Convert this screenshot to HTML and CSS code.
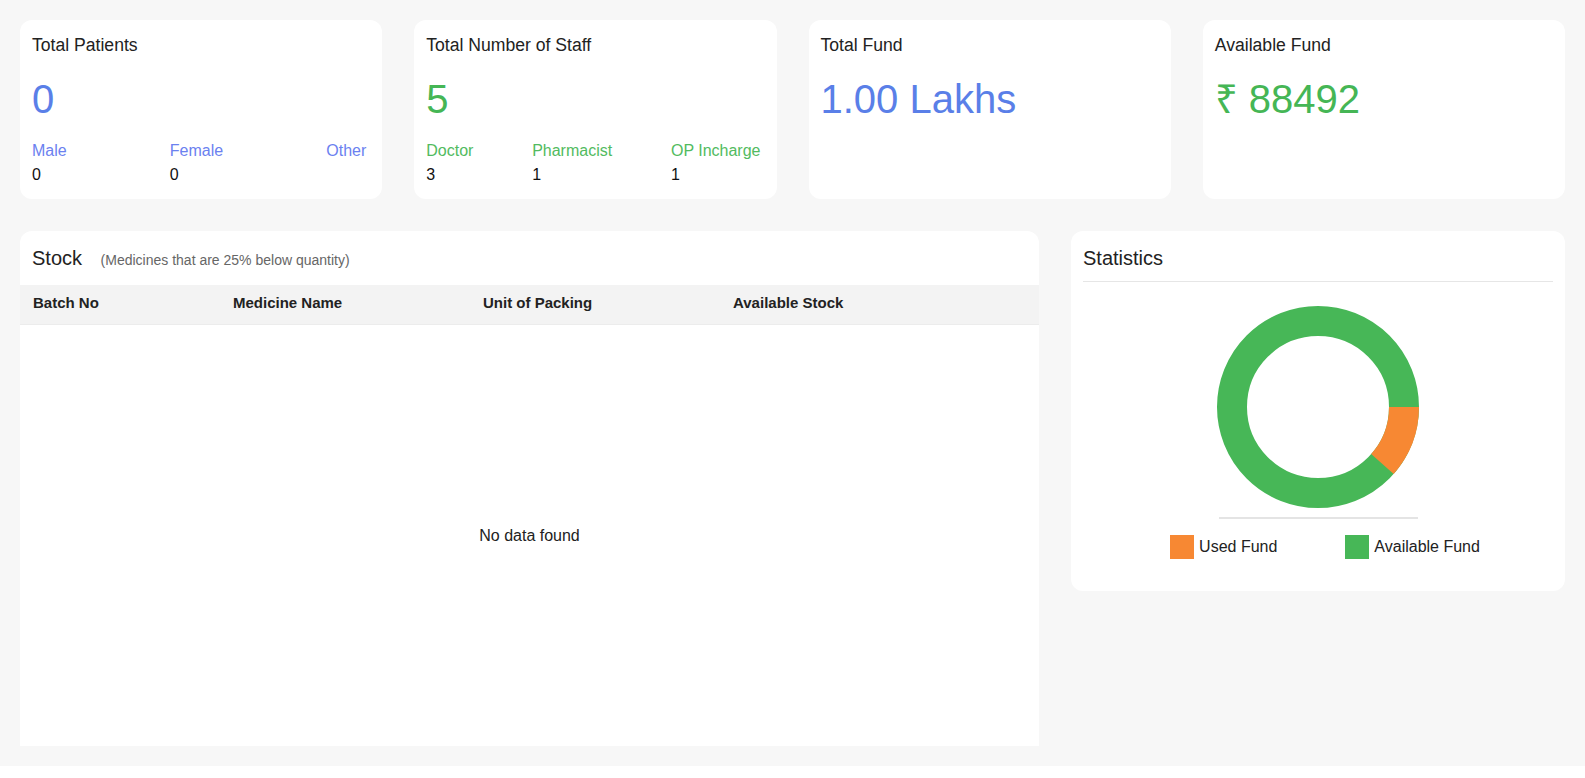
FILE: index.html
```html
<!DOCTYPE html>
<html>
<head>
    <title>Dashboard</title>
    <link rel="stylesheet" href="styles.css">
</head>
<body>
    <div class="page">
        <div class="summary">
            <div class="card">
                <div class="card-title">Total Patients</div>
                <div class="big blue">0</div>
                <div class="split blue-label">
                    <div class="split-item"><div class="label">Male</div><div class="value">0</div></div>
                    <div class="split-item"><div class="label">Female</div><div class="value">0</div></div>
                    <div class="split-item"><div class="label">Other</div></div>
                </div>
            </div>

            <div class="card">
                <div class="card-title">Total Number of Staff</div>
                <div class="big green">5</div>
                <div class="split green-label">
                    <div class="split-item"><div class="label">Doctor</div><div class="value">3</div></div>
                    <div class="split-item"><div class="label">Pharmacist</div><div class="value">1</div></div>
                    <div class="split-item"><div class="label">OP Incharge</div><div class="value">1</div></div>
                </div>
            </div>

            <div class="card">
                <div class="card-title">Total Fund</div>
                <div class="big blue">1.00 Lakhs</div>
            </div>

            <div class="card">
                <div class="card-title">Available Fund</div>
                <div class="big green">₹ 88492</div>
            </div>
        </div>

        <div class="lower">
            <div class="panel stock">
                <div class="panel-head">
                    <span class="panel-title">Stock</span>
                    <span class="panel-note">(Medicines that are 25% below quantity)</span>
                </div>
                <div class="table-head">
                    <div>Batch No</div>
                    <div>Medicine Name</div>
                    <div>Unit of Packing</div>
                    <div>Available Stock</div>
                </div>
                <div class="empty">No data found</div>
            </div>

            <div class="panel stats">
                <div class="panel-head divided">
                    <span class="panel-title">Statistics</span>
                </div>
                <div class="chart">
                    <!-- used 11508 of 100000 = 11.5% -->
                    <svg width="202" height="202" viewBox="0 0 202 202">
                        <circle cx="101" cy="101" r="86" fill="none" stroke="#47b757" stroke-width="30"/>
                        <circle cx="101" cy="101" r="86" fill="none" stroke="#f78833" stroke-width="30"
                                stroke-dasharray="62.18 540.35"/>
                    </svg>
                    <div class="chart-line"></div>
                </div>
                <div class="legend">
                    <div class="legend-item"><span class="swatch orange-bg"></span>Used Fund</div>
                    <div class="legend-item"><span class="swatch green-bg"></span>Available Fund</div>
                </div>
            </div>
        </div>
    </div>
</body>
</html>
```

FILE: styles.css
```css
body {
    font-family: "Liberation Sans", Arial, sans-serif;
    margin: 0;
    padding: 0;
    background-color: #fff;
    color: #222;
}

.page {
    background-color: #f7f7f7;
    padding: 20px;
}

.summary {
    display: grid;
    grid-template-columns: repeat(4, 1fr);
    gap: 32px;
}

.card {
    background-color: #fff;
    border-radius: 12px;
    height: 179px;
    box-sizing: border-box;
    padding: 14px 16px 14px 12px;
}

.card-title {
    font-size: 17.6px;
    line-height: 22px;
    color: #222;
}

.big {
    font-size: 40px;
    line-height: 48px;
    margin-top: 19px;
}

.blue {
    color: #5a7fe8;
}

.green {
    color: #45b655;
}

.split {
    display: flex;
    justify-content: space-between;
    margin-top: 18px;
}

.label {
    font-size: 16px;
    line-height: 20px;
}

.blue-label .label {
    color: #6b81f0;
}

.green-label .label {
    color: #52bb60;
}

.value {
    font-size: 16px;
    line-height: 20px;
    margin-top: 4px;
    color: #111;
}

.lower {
    display: grid;
    grid-template-columns: minmax(0, 1fr) 494px;
    gap: 32px;
    margin-top: 32px;
    align-items: start;
}

.panel {
    background-color: #fff;
    border-radius: 12px;
}

.stock {
    height: 515px;
    border-radius: 12px 12px 0 0;
    display: flex;
    flex-direction: column;
}

.panel-head {
    padding: 15px 12px;
    font-size: 20px;
    line-height: 24px;
    height: 24px;
}

.panel-title {
    font-size: 20px;
    color: #222;
}

.panel-note {
    font-size: 14px;
    color: #666;
    margin-left: 13px;
}

.table-head {
    display: grid;
    grid-template-columns: 200px 250px 250px 1fr;
    height: 39px;
    align-items: center;
    background-color: #f3f3f3;
    border-bottom: 1px solid #ececec;
    font-size: 15px;
    font-weight: bold;
    color: #222;
}

.table-head div {
    padding-left: 13px;
    padding-bottom: 4px;
}

.empty {
    flex: 1;
    display: flex;
    align-items: center;
    justify-content: center;
    font-size: 16px;
    color: #222;
}

.stats {
    padding: 0 12px 32px 12px;
}

.stats .panel-head {
    padding: 15px 0 11px 0;
}

.divided {
    border-bottom: 1px solid #e6e6e6;
}

.chart {
    display: flex;
    flex-direction: column;
    align-items: center;
    margin-top: 24px;
}

.chart svg {
    display: block;
}

.chart-line {
    width: 199px;
    height: 2px;
    background-color: #e4e4e4;
    margin-top: 9px;
}

.legend {
    display: flex;
    justify-content: center;
    gap: 68px;
    margin-top: 16px;
    padding-left: 14px;
    font-size: 16px;
    color: #222;
}

.legend-item {
    display: flex;
    align-items: center;
    gap: 5px;
    line-height: 24px;
}

.swatch {
    display: inline-block;
    width: 24px;
    height: 24px;
}

.orange-bg {
    background-color: #f78833;
}

.green-bg {
    background-color: #47b757;
}
```
